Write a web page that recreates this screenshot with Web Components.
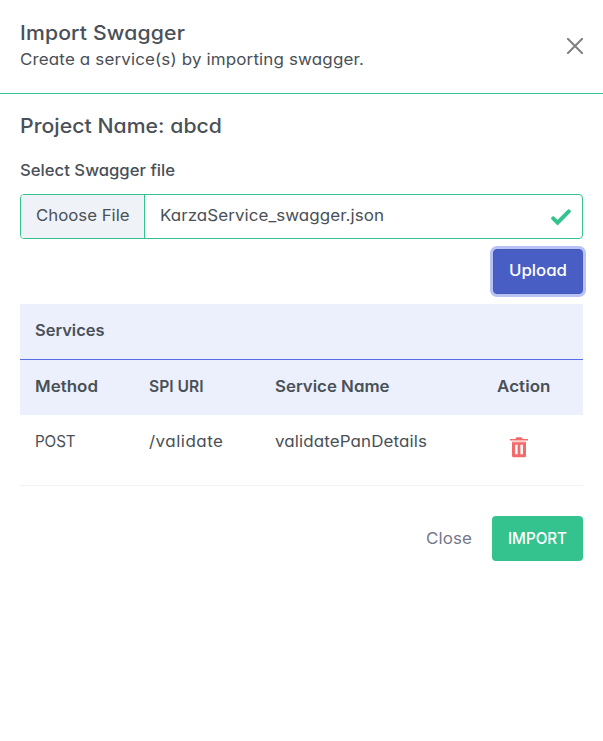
<!DOCTYPE html>
<html lang="en"><head><meta charset="utf-8"><title>Import Swagger</title>
<style>body{margin:0;background:#fff}</style></head><body>
<import-panel></import-panel>
<script>
const define=(name,html,after)=>customElements.define(name,class extends HTMLElement{
  constructor(){super();this.attachShadow({mode:'open'}).innerHTML=html}
  connectedCallback(){if(after)after(this)}
});
// One line of text set to the width in its "w" attribute, by tracking and a slight widening of the letters.
define('ui-text',`<style>:host{display:block;white-space:nowrap}span{display:inline-block;vertical-align:top;transform-origin:0 0}</style><span><slot></slot></span>`,el=>{
  const s=el.shadowRoot.querySelector('span'),w=+el.getAttribute('w'),n=s.getBoundingClientRect().width;
  const k=Math.min(1.06,Math.max(.95,w/n));
  s.style.letterSpacing=((w/k-n)/el.textContent.length).toFixed(3)+'px';
  s.style.transform='scaleX('+k+')';
  el.style.width=w+'px';
});
define('panel-header',`<style>
:host{display:flex;justify-content:space-between;align-items:flex-start;box-sizing:border-box;height:94px;padding:21px 20px 0;border-bottom:1px solid #34c38f}
.x{margin:17px 0 0;width:16px;height:16px;display:block}
</style><div><slot></slot></div><svg class="x" viewBox="0 0 16 16"><path d="M.8.8 15.2 15.2M15.2.8.8 15.2" fill="none" stroke="#808080" stroke-width="2" stroke-linecap="round"/></svg>`);
define('file-field',`<style>
:host{display:flex;box-sizing:border-box;height:45px;border:1px solid #34c38f;border-radius:4px;overflow:hidden;background:#fff}
.pick{box-sizing:border-box;width:124px;padding:8px 15px;background:#eff2f7;border-right:1px solid #34c38f}
.name{flex:1;padding:8px 15px}
svg{width:20px;height:17px;margin:14px 11px 0 0}
</style><div class="pick"><slot name="pick"></slot></div><div class="name"><slot></slot></div>
<svg viewBox="0 0 20 17"><path d="M2.2 9.3 6.6 13.7 17.8 2.4" fill="none" stroke="#34c38f" stroke-width="4" stroke-linecap="round"/></svg>`);
define('ui-button',`<style>
:host{display:block;box-sizing:border-box;height:45px;padding:9.5px 16px;border-radius:4px;color:#fff;background:#34c38f}
:host([primary]){background:#485ec4;border:1px solid #4458b8;padding:8px 15px;box-shadow:0 0 0 3px #b9c2f5}
:host([plain]){background:none;color:#74788d;padding-inline:20px}
</style><slot></slot>`);
define('trash-icon',`<style>:host{display:block;width:20px;height:22px}svg{display:block}</style>
<svg width="20" height="22" viewBox="0 0 20 22"><path d="M1 3h5.2l1.3-1.8h5L13.8 3H19v1.500H1z" fill="#f46a6a"/><path d="M3 4.500h14v2H3z" fill="#fbc9c9"/><path fill-rule="evenodd" d="M3 6.3h14v13.5q0 1.5-1.5 1.5h-11Q3 21.300 3 19.800zM6.100 8.800v9.400h2.500V8.800zm5.300 0v9.400h2.500V8.800z" fill="#f46a6a"/></svg>`);
define('service-row',`<style>
:host{display:grid;grid-template-columns:113.500px 126.500px 221.500px 1fr;box-sizing:border-box;height:71px;padding:14px 15px 0;border-bottom:1px solid #eff2f7}
:host([head]){height:55px;background:#ecf0fd;border:0;font-weight:600}
:host([title]){height:56px;border-bottom:1px solid #556ee6}
</style><slot></slot>`);
define('import-panel',`<style>
:host{display:block;color:#495057;font:400 16px/24px Inter,"Open Sans",sans-serif;font-feature-settings:"cv11" 1}
.h{font-size:20px;font-weight:480}.m{font-weight:460}.l{font-weight:370}
.sub{margin-top:2px}
main{padding:20px 20px 0}
.label{margin:20px 0 12px}
.up{display:flex;justify-content:flex-end;padding:10px 0}
.end{display:flex;justify-content:flex-end;padding-top:30px}
trash-icon{margin:7px 0 0 12.500px}
</style>
<panel-header><ui-text class="h" w="165">Import Swagger</ui-text><ui-text class="l sub" w="344">Create a service(s) by importing swagger.</ui-text></panel-header>
<main>
<ui-text class="h" w="202">Project Name: abcd</ui-text>
<ui-text class="m label" w="155">Select Swagger file</ui-text>
<file-field><ui-text slot="pick" class="l" w="93.500">Choose File</ui-text><ui-text class="l" w="224">KarzaService_swagger.json</ui-text></file-field>
<div class="up"><ui-button primary><ui-text class="m" w="58">Upload</ui-text></ui-button></div>
<service-row head title><ui-text w="69.500">Services</ui-text></service-row>
<service-row head><ui-text w="63">Method</ui-text><ui-text w="54.500">SPI URI</ui-text><ui-text w="114.500">Service Name</ui-text><ui-text w="53.500">Action</ui-text></service-row>
<service-row><ui-text class="l" w="40.500">POST</ui-text><ui-text class="l" w="74.500">/validate</ui-text><ui-text class="l" w="152">validatePanDetails</ui-text><trash-icon></trash-icon></service-row>
<div class="end"><ui-button plain><ui-text class="l" w="46">Close</ui-text></ui-button><ui-button><ui-text class="m" w="59">IMPORT</ui-text></ui-button></div>
</main>`);
</script></body></html>
